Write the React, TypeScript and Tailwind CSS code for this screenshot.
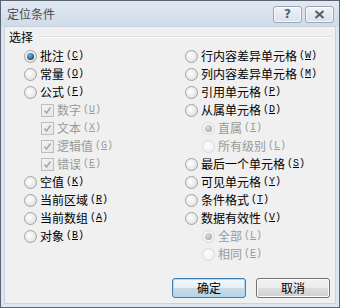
import React from "react";

const FONT = { fontFamily: '"Noto Sans CJK SC", "Noto Sans", sans-serif' };
const MONO = { fontFamily: '"Liberation Mono", "DejaVu Sans Mono", monospace' };

function Radio({ checked = false, disabled = false }: { checked?: boolean; disabled?: boolean }) {
  return (
    <span
      className={
        "relative inline-flex h-[13px] w-[13px] shrink-0 items-center justify-center rounded-full border " +
        (disabled
          ? "border-[#dadada] bg-[radial-gradient(circle_at_40%_40%,#fdfdfd,#ececec)]"
          : "border-[#a2a2a2] bg-[radial-gradient(circle_at_40%_40%,#ffffff,#d8d8d8)]")
      }
    >
      {checked && (
        <span
          className={
            "h-[7px] w-[7px] rounded-full " +
            (disabled
              ? "bg-[radial-gradient(circle_at_40%_35%,#dedede,#9a9a9a)]"
              : "bg-[radial-gradient(circle_at_40%_35%,#74bbe8,#1a4f7a_70%)]")
          }
        />
      )}
    </span>
  );
}

function Check({ disabled = true }: { disabled?: boolean }) {
  return (
    <span className="inline-flex h-[13px] w-[13px] shrink-0 items-center justify-center border border-[#bdbdbd] bg-[linear-gradient(135deg,#f4f4f4,#e6e6e6)]">
      <svg width="9" height="9" viewBox="0 0 9 9">
        <path d="M1.5 4.5 L3.5 7 L7.5 1.5" fill="none" stroke={disabled ? "#a8a8a8" : "#333"} strokeWidth="1.6" />
      </svg>
    </span>
  );
}

function Label({ text, k, disabled = false }: { text: string; k: string; disabled?: boolean }) {
  return (
    <span className={"flex items-center text-[12px] leading-none " + (disabled ? "text-[#9a9a9a]" : "text-black")}>
      <span style={FONT}>{text}</span>
      <span style={MONO} className="ml-[2px] text-[10px]">
        (<span className="underline underline-offset-1">{k}</span>)
      </span>
    </span>
  );
}

type Item = { t: string; k: string; kind: "radio" | "check" | "sub"; checked?: boolean; disabled?: boolean };

const left: Item[] = [
  { t: "批注", k: "C", kind: "radio", checked: true },
  { t: "常量", k: "O", kind: "radio" },
  { t: "公式", k: "F", kind: "radio" },
  { t: "数字", k: "U", kind: "check", disabled: true },
  { t: "文本", k: "X", kind: "check", disabled: true },
  { t: "逻辑值", k: "G", kind: "check", disabled: true },
  { t: "错误", k: "E", kind: "check", disabled: true },
  { t: "空值", k: "K", kind: "radio" },
  { t: "当前区域", k: "R", kind: "radio" },
  { t: "当前数组", k: "A", kind: "radio" },
  { t: "对象", k: "B", kind: "radio" },
];

const right: Item[] = [
  { t: "行内容差异单元格", k: "W", kind: "radio" },
  { t: "列内容差异单元格", k: "M", kind: "radio" },
  { t: "引用单元格", k: "P", kind: "radio" },
  { t: "从属单元格", k: "D", kind: "radio" },
  { t: "直属", k: "I", kind: "sub", checked: true, disabled: true },
  { t: "所有级别", k: "L", kind: "sub", disabled: true },
  { t: "最后一个单元格", k: "S", kind: "radio" },
  { t: "可见单元格", k: "Y", kind: "radio" },
  { t: "条件格式", k: "T", kind: "radio" },
  { t: "数据有效性", k: "V", kind: "radio" },
  { t: "全部", k: "L", kind: "sub", checked: true, disabled: true },
  { t: "相同", k: "E", kind: "sub", disabled: true },
];

function Row({ it }: { it: Item }) {
  if (it.kind === "check") {
    return (
      <div className="flex h-[18px] items-center pl-[17px]">
        <Check />
        <span className="ml-[3px]">
          <Label text={it.t} k={it.k} disabled />
        </span>
      </div>
    );
  }
  return (
    <div className={"flex h-[18px] items-center " + (it.kind === "sub" ? "pl-[17px]" : "")}>
      <Radio checked={it.checked} disabled={it.disabled} />
      <span className="ml-[3px]">
        <Label text={it.t} k={it.k} disabled={it.disabled} />
      </span>
    </div>
  );
}

function TitleBtn({ children }: { children: React.ReactNode }) {
  return (
    <div className="flex h-[17px] w-[29px] items-center justify-center rounded-[3px] border border-[#9aa6b5] bg-[linear-gradient(#f0f3f7,#d9e1eb)] shadow-[inset_0_0_0_1px_rgba(255,255,255,0.7)]">
      {children}
    </div>
  );
}

export default function App() {
  return (
    <div className="flex h-[308px] w-[340px] flex-col border border-[#5b6370] bg-[#dce6f1]" style={FONT}>
      <div className="flex h-[25px] items-center justify-between bg-[linear-gradient(#e1e9f3,#d0dbe9)] pl-[6px] pr-[5px]">
        <span className="text-[12px] text-[#4a4a4a]">定位条件</span>
        <div className="mt-[1px] flex gap-[3px]">
          <TitleBtn>
            <span className="text-[12px] font-bold leading-none text-[#56606c]" style={{ fontFamily: '"DejaVu Sans", sans-serif' }}>?</span>
          </TitleBtn>
          <TitleBtn>
            <svg width="11" height="9" viewBox="0 0 11 9">
              <path d="M1.5 1 L9.5 8 M9.5 1 L1.5 8" stroke="#56606c" strokeWidth="2.2" />
            </svg>
          </TitleBtn>
        </div>
      </div>
      <div className="mx-[3px] mb-[3px] flex flex-1 flex-col border border-[#c7d3e1] bg-[#f0f0f0] pl-[4px] pt-[2px]">
        <div className="flex h-[16px] items-center">
          <span className="text-[12px] text-black">选择</span>
          <div className="ml-[6px] mr-[3px] flex-1 border-t border-[#d5dfe5] border-b-white border-b" />
        </div>
        <div className="mt-[2px] grid grid-cols-[161px_1fr] pl-[15px]">
          <div className="flex flex-col">
            {left.map((it) => (
              <Row key={it.t} it={it} />
            ))}
          </div>
          <div className="flex flex-col">
            {right.map((it) => (
              <Row key={it.t} it={it} />
            ))}
          </div>
        </div>
        <div className="mt-[15px] flex justify-end gap-[10px] pr-[5px]">
          <button className="flex h-[20px] w-[74px] items-center justify-center rounded-[3px] border border-[#3c7fb1] bg-[linear-gradient(#f4f9fc_0%,#e6f0f6_50%,#c9dbe7_51%,#bcd1df_100%)] text-[12px] text-black shadow-[inset_0_0_0_1px_#a6dcf5]">
            确定
          </button>
          <button className="flex h-[20px] w-[74px] items-center justify-center rounded-[3px] border border-[#707070] bg-[linear-gradient(#f2f2f2_0%,#ebebeb_50%,#dddddd_51%,#cfcfcf_100%)] text-[12px] text-black shadow-[inset_0_0_0_1px_#fcfcfc]">
            取消
          </button>
        </div>
      </div>
    </div>
  );
}
